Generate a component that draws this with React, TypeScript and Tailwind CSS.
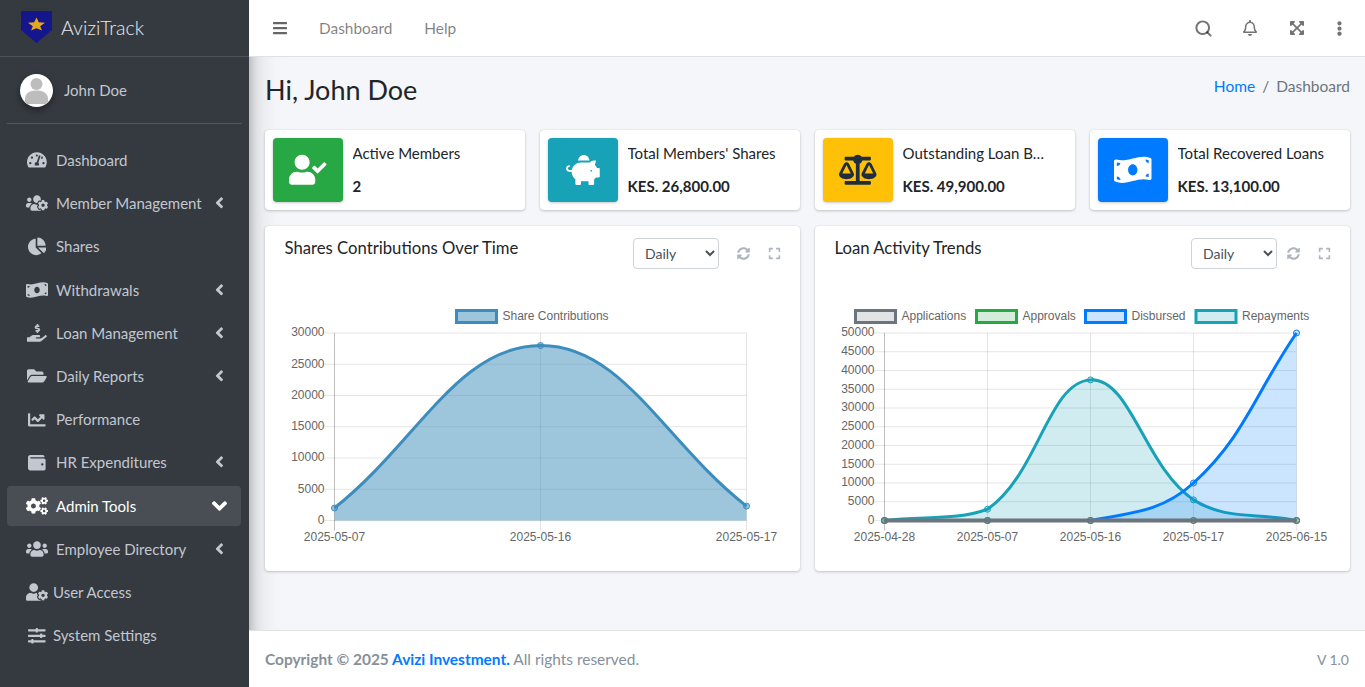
import { ReactNode } from "react";
import { Search } from "lucide-react";
import {
  FaAngleDown,
  FaAngleLeft,
  FaBalanceScale,
  FaBars,
  FaChartLine,
  FaChartPie,
  FaCogs,
  FaEllipsisV,
  FaExpand,
  FaExpandArrowsAlt,
  FaFolderOpen,
  FaHandHoldingUsd,
  FaMoneyBillWave,
  FaPiggyBank,
  FaRegBell,
  FaSlidersH,
  FaSyncAlt,
  FaTachometerAlt,
  FaUserCheck,
  FaUserCog,
  FaUsers,
  FaUsersCog,
  FaWallet,
} from "react-icons/fa";

// react-icons fits the glyph inside a square, so wide glyphs need a wider box
const navItems = [
  { label: "Dashboard", icon: FaTachometerAlt, size: "size-[19.8px]" },
  { label: "Member Management", icon: FaUsersCog, size: "size-[22px]", arrow: true },
  { label: "Shares", icon: FaChartPie, size: "size-[18.7px]" },
  { label: "Withdrawals", icon: FaMoneyBillWave, size: "size-[22px]", arrow: true },
  { label: "Loan Management", icon: FaHandHoldingUsd, size: "size-[19.8px]", arrow: true },
  { label: "Daily Reports", icon: FaFolderOpen, size: "size-[19.8px]", arrow: true },
  { label: "Performance", icon: FaChartLine, size: "size-[17.6px]" },
  { label: "HR Expenditures", icon: FaWallet, size: "size-[17.6px]", arrow: true },
  { label: "Admin Tools", icon: FaCogs, size: "size-[22px]", arrow: true, active: true },
  { label: "Employee Directory", icon: FaUsers, size: "size-[22px]", arrow: true },
  { label: "User Access", icon: FaUserCog, size: "size-[22px]", tight: true },
  { label: "System Settings", icon: FaSlidersH, size: "size-[17.6px]", tight: true },
];

const infoBoxes = [
  { title: "Active Members", value: "2", icon: FaUserCheck, size: "size-[37.5px]", box: "bg-[#28a745] text-white" },
  { title: "Total Members' Shares", value: "KES. 26,800.00", icon: FaPiggyBank, size: "size-[33.75px]", box: "bg-[#17a2b8] text-white" },
  { title: "Outstanding Loan Balance", value: "KES. 49,900.00", icon: FaBalanceScale, size: "size-[37.5px]", box: "bg-[#ffc107] text-[#1f2d3d]", titleClass: "max-w-[147px]" },
  { title: "Total Recovered Loans", value: "KES. 13,100.00", icon: FaMoneyBillWave, size: "size-[37.5px]", box: "bg-[#007bff] text-white" },
];

type Pt = [number, number];

// same curve chart.js draws with tension 0.4, control points capped to the plot area
function spline(pts: Pt[], top: number, bottom: number) {
  const t = 0.4;
  const cap = (y: number) => Math.min(bottom, Math.max(top, y));
  const ctrl = pts.map((cur, i) => {
    const prev = pts[i - 1] ?? cur;
    const next = pts[i + 1] ?? cur;
    const d01 = Math.hypot(cur[0] - prev[0], cur[1] - prev[1]);
    const d12 = Math.hypot(next[0] - cur[0], next[1] - cur[1]);
    const sum = d01 + d12 || 1;
    const fa = (t * d01) / sum;
    const fb = (t * d12) / sum;
    return {
      before: [cur[0] - fa * (next[0] - prev[0]), cap(cur[1] - fa * (next[1] - prev[1]))],
      after: [cur[0] + fb * (next[0] - prev[0]), cap(cur[1] + fb * (next[1] - prev[1]))],
    };
  });
  let d = `M${pts[0][0]} ${pts[0][1]}`;
  for (let i = 1; i < pts.length; i++) {
    const a = ctrl[i - 1].after;
    const b = ctrl[i].before;
    d += ` C${a[0]} ${a[1]} ${b[0]} ${b[1]} ${pts[i][0]} ${pts[i][1]}`;
  }
  return d;
}

interface Series {
  label: string;
  data: number[];
  stroke: string;
  fill: string;
  point: string;
  legendX: number;
  lineWidth?: number;
}

interface ChartProps {
  labels: string[];
  max: number;
  step: number;
  series: Series[];
}

// chart coords are relative to the card's top left corner
function LineChart({ labels, max, step, series }: ChartProps) {
  const left = 69.5;
  const right = 481.5;
  const top = 107;
  const bottom = 294.5;
  const xs = labels.map((_, i) => left + ((right - left) * i) / (labels.length - 1));
  const ticks: number[] = [];
  for (let v = 0; v <= max; v += step) ticks.push(v);
  const yOf = (v: number) => bottom - ((bottom - top) * v) / max;

  return (
    <svg width="535" height="345" className="absolute left-0 top-0" style={{ fontFamily: "'Liberation Sans', Arial, sans-serif" }}>
      {ticks.map((v) => (
        <g key={v}>
          <line x1={left - 10} x2={right} y1={yOf(v)} y2={yOf(v)} stroke="rgba(0,0,0,0.1)" />
          <text x={left - 10} y={yOf(v) + 3.4} textAnchor="end" fontSize="12" fill="#666">
            {v}
          </text>
        </g>
      ))}
      {xs.map((x, i) => (
        <g key={labels[i]}>
          <line x1={x} x2={x} y1={top} y2={bottom + 10} stroke={i === 0 ? "rgba(0,0,0,0.25)" : "rgba(0,0,0,0.1)"} />
          <text x={x} y={bottom + 20} textAnchor="middle" fontSize="12" fill="#666">
            {labels[i]}
          </text>
        </g>
      ))}
      {series.map((s) => {
        const pts = s.data.map((v, i): Pt => [xs[i], yOf(v)]);
        const line = spline(pts, top, bottom);
        return (
          <g key={s.label}>
            <path d={`${line} L${right} ${bottom} L${left} ${bottom} Z`} fill={s.fill} />
            <path d={line} fill="none" stroke={s.stroke} strokeWidth={s.lineWidth ?? 3} />
            {pts.map((p, i) => (
              <circle key={i} cx={p[0]} cy={p[1]} r="3" fill={s.point} stroke={s.stroke} strokeWidth="1" />
            ))}
          </g>
        );
      })}
      {series.map((s) => (
        <g key={s.label}>
          <rect x={s.legendX + 1.5} y="84.5" width="40" height="12" fill={s.fill} stroke={s.stroke} strokeWidth="3" />
          <text x={s.legendX + 47.5} y="94" fontSize="12" fill="#666">
            {s.label}
          </text>
        </g>
      ))}
    </svg>
  );
}

function ChartCard({ title, selectGap, children }: { title: string; selectGap: string; children: ReactNode }) {
  return (
    <div className="relative h-[345px] rounded bg-white shadow-[0_0_1px_rgba(0,0,0,0.125),0_1px_3px_rgba(0,0,0,0.2)]">
      {children}
      <div className="relative flex items-start pl-[19.5px] pr-[19px] pt-3">
        <h3 className="flex-1 text-[16.7px] leading-[21px] text-[#212529]">{title}</h3>
        <select className={`h-[31px] w-[86px] rounded border border-[#ced4da] bg-white pl-[7px] text-sm text-[#495057] ${selectGap}`}>
          <option>Daily</option>
        </select>
        <div className="flex h-[31px] items-center gap-[18px] text-[13px] text-[#adb5bd]">
          <FaSyncAlt />
          <FaExpand />
        </div>
      </div>
    </div>
  );
}

function Sidebar() {
  return (
    <aside className="flex w-[249px] shrink-0 flex-col bg-[#343a40] shadow-[0_14px_28px_rgba(0,0,0,0.25),0_10px_10px_rgba(0,0,0,0.22)]">
      <div className="flex h-[57px] items-center gap-[9px] border-b border-[#4b545c] pb-[3px] pl-[21px]">
        <svg width="31" height="32" viewBox="0 0 31 32">
          <path d="M0 0H31V19L15.5 32L0 19Z" fill="#15158c" />
          <path d="M15.500 6.500L17.800 11.300L24 11.800L19.200 15.300L21 19.500L15.500 17.200L10 19.500L11.800 15.300L7 11.800L13.200 11.300Z" fill="#e3a81c" />
        </svg>
        <span className="mt-[3px] text-[19.6px] font-light text-white/90">AviziTrack</span>
      </div>
      <div className="mx-[7px] flex h-[67px] items-center gap-[11px] border-b border-[#4f5962] pl-[13px] pr-px">
        <div className="flex size-[33px] items-center justify-center overflow-hidden rounded-full bg-white shadow-[0_3px_6px_rgba(0,0,0,0.4)]">
          <svg width="25" height="27" viewBox="0 0 25 27" fill="#bdbdbd">
            <circle cx="12.5" cy="7" r="6" />
            <path d="M1 27v-5c0-6 5-8.500 11.500-8.500S24 16 24 22v5Z" />
          </svg>
        </div>
        <span className="text-[15px] text-[#c2c7d0]">John Doe</span>
      </div>
      <nav className="ml-[7px] mr-2 mt-[16.3px] flex flex-col gap-[3.2px]">
        {navItems.map(({ label, icon: Icon, size, arrow, active, tight }) => (
          <div
            key={label}
            className={`flex h-10 items-center rounded pl-[19px] pr-[17.6px] text-[15px] ${active ? "bg-white/10 text-white" : "text-[#c2c7d0]"}`}
          >
            <span className={`flex w-[22px] items-center justify-center ${tight ? "mr-[5px]" : "mr-2"}`}>
              <Icon className={size} />
            </span>
            <span className="flex-1">{label}</span>
            {arrow &&
              (active ? (
                <FaAngleDown className="-mr-[3.6px] h-6 w-[15px]" />
              ) : (
                <FaAngleLeft className="-mt-px h-[17.6px] w-[8.8px]" />
              ))}
          </div>
        ))}
      </nav>
    </aside>
  );
}

export default function App() {
  const lato = { fontFamily: "Lato, 'Noto Sans', sans-serif" };
  return (
    <div className="flex h-[687px] overflow-hidden bg-[#f4f6f9]" style={lato}>
      <Sidebar />
      <div className="flex min-w-0 flex-1 flex-col">
        <header className="flex h-[57px] shrink-0 items-center border-b border-[#dee2e6] bg-white pl-[23px] pr-[7.5px] text-[15.4px] text-black/50">
          <FaBars className="mr-[31px] text-base text-black/60" />
          <span className="mr-8 mt-0.5">Dashboard</span>
          <span className="mt-0.5 flex-1">Help</span>
          <div className="flex items-center text-black/55">
            <span className="flex w-[47px] justify-center">
              <Search size={19} strokeWidth={2.5} />
            </span>
            <span className="flex w-[47px] justify-center">
              <FaRegBell className="text-base" />
            </span>
            <span className="flex w-[47px] justify-center">
              <FaExpandArrowsAlt className="text-base" />
            </span>
            <span className="flex w-[37px] justify-center">
              <FaEllipsisV className="text-[15px]" />
            </span>
          </div>
        </header>

        <main className="flex-1 pl-4 pr-[15px]">
          <div className="flex h-[73px] items-center justify-between pb-1.5">
            <h1 className="text-[27px] text-[#212529]">Hi, John Doe</h1>
            <div className="-mt-2 text-[15.5px] text-[#6c757d]">
              <span className="text-[#007bff]">Home</span>
              <span className="px-[7px]">/</span>
              Dashboard
            </div>
          </div>

          <div className="grid grid-cols-4 gap-[15px]">
            {infoBoxes.map(({ title, value, icon: Icon, size, box, titleClass }) => (
              <div key={title} className="flex h-20 items-stretch rounded bg-white p-2 shadow-[0_0_1px_rgba(0,0,0,0.125),0_1px_3px_rgba(0,0,0,0.2)]">
                <div className={`flex h-16 w-[70px] shrink-0 items-center justify-center rounded-sm shadow-[0_0_1px_rgba(0,0,0,0.125),0_1px_3px_rgba(0,0,0,0.2)] ${box}`}>
                  <Icon className={size} />
                </div>
                <div className="flex min-w-0 flex-1 flex-col pl-[9.5px] pr-3 pt-[5px] text-[15px] text-[#212529]">
                  <span className={`truncate leading-5 ${titleClass ?? ""}`}>{title}</span>
                  <span className="mt-[13px] font-bold leading-5">{value}</span>
                </div>
              </div>
            ))}
          </div>

          <div className="mt-4 grid grid-cols-2 gap-[15px]">
            <ChartCard title="Shares Contributions Over Time" selectGap="mr-[18px]">
              <LineChart
                labels={["2025-05-07", "2025-05-16", "2025-05-17"]}
                max={30000}
                step={5000}
                series={[
                  { label: "Share Contributions", data: [2000, 28000, 2300], stroke: "#3c8dbc", fill: "rgba(60,141,188,0.5)", point: "rgba(60,141,188,0.5)", legendX: 190 },
                ]}
              />
            </ChartCard>
            <ChartCard title="Loan Activity Trends" selectGap="mr-[10px]">
              <LineChart
                labels={["2025-04-28", "2025-05-07", "2025-05-16", "2025-05-17", "2025-06-15"]}
                max={50000}
                step={5000}
                series={[
                  { label: "Repayments", data: [0, 3000, 37500, 5500, 0], stroke: "#17a2b8", fill: "rgba(23,162,184,0.2)", point: "rgba(23,162,184,0.2)", legendX: 379.5 },
                  { label: "Disbursed", data: [0, 0, 0, 10000, 50000], stroke: "#007bff", fill: "rgba(0,123,255,0.2)", point: "rgba(0,123,255,0.2)", legendX: 269 },
                  { label: "Approvals", data: [0, 0, 0, 0, 0], stroke: "#28a745", fill: "rgba(40,167,69,0.2)", point: "rgba(40,167,69,0.2)", legendX: 160 },
                  { label: "Applications", data: [0, 0, 0, 0, 0], stroke: "#6c757d", fill: "rgba(108,117,125,0.2)", point: "rgba(108,117,125,0.2)", legendX: 39, lineWidth: 4 },
                ]}
              />
            </ChartCard>
          </div>
        </main>

        <footer className="flex h-[57px] shrink-0 items-center justify-between border-t border-[#dee2e6] bg-white pl-4 pr-4 pt-0.5 text-[15.45px] text-[#869099]">
          <span>
            <strong>
              Copyright © 2025 <span className="text-[#007bff]">Avizi Investment.</span>
            </strong>{" "}
            All rights reserved.
          </span>
          <span className="text-sm">V 1.0</span>
        </footer>
      </div>
    </div>
  );
}
